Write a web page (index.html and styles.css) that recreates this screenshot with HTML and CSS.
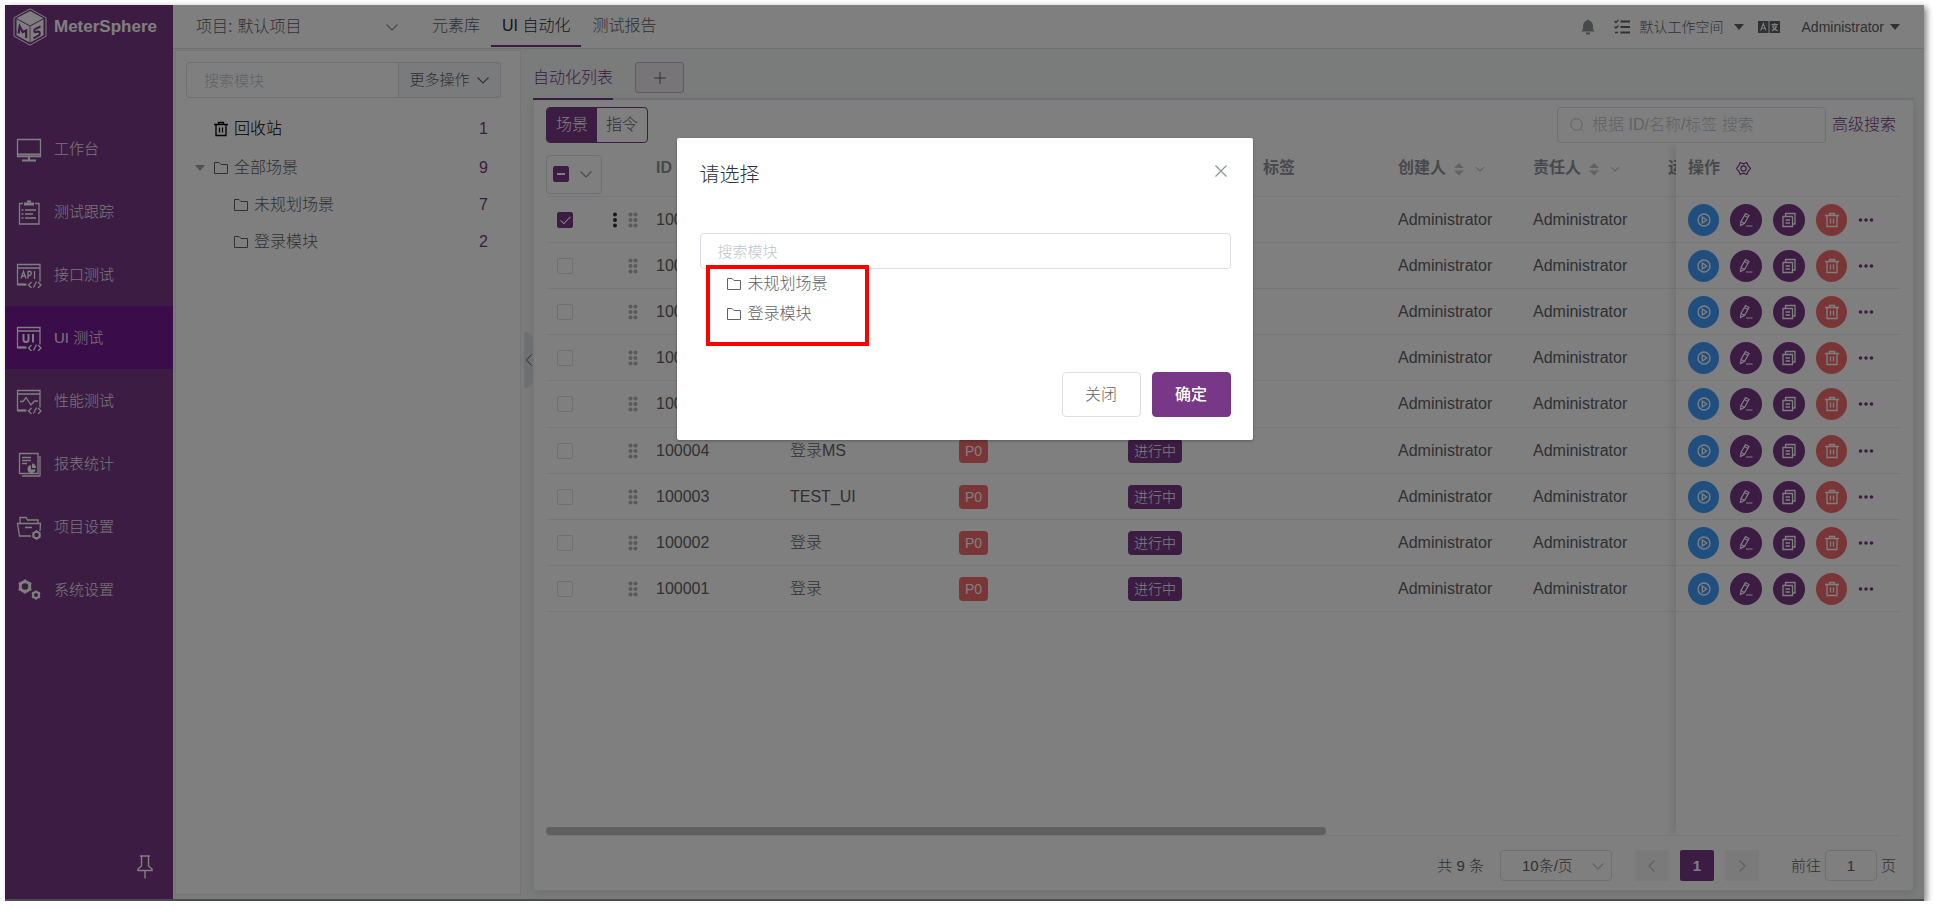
FILE: index.html
```html
<!DOCTYPE html>
<html lang="zh-CN">
<head>
<meta charset="utf-8">
<title>MeterSphere</title>
<link rel="stylesheet" href="styles.css">
</head>
<body>
<svg class="sprite" aria-hidden="true">
  <symbol id="i-folder" viewBox="0 0 16 16"><path d="M1.500 2.500h4.500l2 2h6.500v9h-13z" fill="none" stroke="currentColor"/></symbol>
  <symbol id="i-trash" viewBox="0 0 16 16"><path d="M1 3.500h14M5.500 3.500v-2h5v2M3 3.500v11h10v-11M6.500 6.500v5M9.500 6.500v5" fill="none" stroke="currentColor" stroke-width="1.300"/></symbol>
  <symbol id="i-down" viewBox="0 0 14 14"><path d="M1.500 4.500L7 10l5.500-5.500" fill="none" stroke="currentColor" stroke-width="1.100"/></symbol>
  <symbol id="i-left" viewBox="0 0 14 14"><path d="M9.500 1.500L4 7l5.500 5.500" fill="none" stroke="currentColor" stroke-width="1.400"/></symbol>
  <symbol id="i-right" viewBox="0 0 14 14"><path d="M4.500 1.500L10 7l-5.500 5.500" fill="none" stroke="currentColor" stroke-width="1.400"/></symbol>
  <symbol id="i-caret" viewBox="0 0 10 6"><path d="M0 0h10L5 6z" fill="currentColor"/></symbol>
  <symbol id="i-sort" viewBox="0 0 12 14"><path d="M1 6l5-5 5 5zM1 8.500l5 5 5-5z" fill="currentColor"/></symbol>
  <symbol id="i-play" viewBox="0 0 16 16"><circle cx="8" cy="8" r="6" fill="none" stroke="currentColor" stroke-width="1.300"/><path d="M6.300 5l4.400 3-4.400 3z" fill="none" stroke="currentColor" stroke-width="1.300"/></symbol>
  <symbol id="i-edit" viewBox="0 0 16 16"><path d="M2.500 13.500l.5-4L7.500 1.500l3.500 2L6.500 11.500zM6.500 3.500l3.300 1.900M3 9.500l3.500 2M8 14h6.500" fill="none" stroke="currentColor" stroke-width="1.200"/></symbol>
  <symbol id="i-copy" viewBox="0 0 16 16"><path d="M2 4.500h9.500v10H2zM4.500 4.500v-3H14v10.500h-2.500M4.500 8h4.500M4.500 11h4.500" fill="none" stroke="currentColor" stroke-width="1.300"/></symbol>
  <symbol id="i-dots" viewBox="0 0 16 6"><circle cx="2.500" cy="3" r="1.800"/><circle cx="8" cy="3" r="1.800"/><circle cx="13.500" cy="3" r="1.800"/></symbol>
  <symbol id="i-more" viewBox="0 0 6 16"><circle cx="3" cy="2.500" r="2"/><circle cx="3" cy="8" r="2"/><circle cx="3" cy="13.500" r="2"/></symbol>
  <symbol id="i-grip" viewBox="0 0 10 16"><circle cx="2.500" cy="2.500" r="2"/><circle cx="7.500" cy="2.500" r="2"/><circle cx="2.500" cy="8" r="2"/><circle cx="7.500" cy="8" r="2"/><circle cx="2.500" cy="13.500" r="2"/><circle cx="7.500" cy="13.500" r="2"/></symbol>
</svg>

<div class="frame">
  <aside class="sidebar">
    <a class="brand" href="#">
      <svg class="brand-logo" viewBox="0 0 34 38"><path d="M17 .8l16 9v18.400l-16 9-16-9V9.800z" fill="none" stroke="#fff"/><path d="M17 3l13.500 7.300L17 17.500 3.500 10.300z" fill="#fff"/><path d="M3.500 11.300L16.600 18.300v16.200L3.500 27.300zM30.500 11.300L17.400 18.300v16.200l13.100-7.200z" fill="#fff"/><path d="M5.500 25.500l1.200-7 3 5.500 3.500-1.500v7.500" fill="none" stroke="#783887" stroke-width="2.200"/><path d="M27.500 18.500l-5 2.300c-1.800 1-1.500 3.500 0 3.500l2.500-.8c2.500 0 2.200 3.200.5 4.200l-5 2.600" fill="none" stroke="#783887" stroke-width="2"/></svg>
      <span>MeterSphere</span>
    </a>
    <nav class="menu">
      <a class="menu-item" href="#"><svg viewBox="0 0 26 26"><path d="M1.500 3.500h23v17h-23z"/><path d="M1 18.500h24M13 20.500v3M6 24.500h14" stroke-width="2"/></svg><span>工作台</span></a>
      <a class="menu-item" href="#"><svg viewBox="0 0 26 26"><path d="M7 4.500H3.500v20.500h19.500V4.500H19"/><path d="M8 5h10" stroke-width="3"/><path d="M11 2.500h4" stroke-width="2"/><path d="M5.500 11h2M9 11h11M5.500 15h2M9 15h8M5.500 19h2M9 19h11"/></svg><span>测试跟踪</span></a>
      <a class="menu-item" href="#"><svg viewBox="0 0 26 26"><path d="M10 22.500H1.500v-20h22.500v17M1.500 6h22.500M15.500 20l-3 3 3 3M22 20l3 3-3 3M20.500 19.500l-3 6"/><path d="M1.500 22.500h9" stroke-width="2"/><path d="M5 16.500L7.500 9.500l2.500 7M6 14h3M12 16.500v-7h2.500q2 2-.5 4H12M18.500 9v8"/></svg><span>接口测试</span></a>
      <a class="menu-item is-active" href="#"><svg viewBox="0 0 26 26"><path d="M10 22.500H1.500v-20h22.500v17M1.500 6h22.500M15.500 20l-3 3 3 3M22 20l3 3-3 3M20.500 19.500l-3 6"/><path d="M1.500 22.500h9" stroke-width="2"/><path d="M7.500 9v5.500q0 2.500 2.500 2.500t2.500-2.500V9M17 9v8.500" stroke-width="2"/></svg><span>UI 测试</span></a>
      <a class="menu-item" href="#"><svg viewBox="0 0 26 26"><path d="M10 22.500H1.500v-20h22.500v17M1.500 6h22.500M15.500 20l-3 3 3 3M22 20l3 3-3 3M20.500 19.500l-3 6"/><path d="M1.500 22.500h9" stroke-width="2"/><path d="M4 13.500h3l3-4 5 7.500 3.500-4H22"/></svg><span>性能测试</span></a>
      <a class="menu-item" href="#"><svg viewBox="0 0 26 26"><path d="M3.500 2.500h18.500v20H3.500zM24 5v20.500M6 25h18M6 6.500h9M6 9.500h9M6 12.500h5"/><path d="M15 14a4 4 0 1 0 4.500 4.500H15z" fill="currentColor" stroke="none"/><path d="M16 12.500v4.500h4a4 4 0 0 0-4-4.500z" fill="currentColor" stroke="none"/></svg><span>报表统计</span></a>
      <a class="menu-item" href="#"><svg viewBox="0 0 26 26"><path d="M15 22H3.500L1.500 9.500h23l-.5 7.500M4 9.500V3.500h6l1.500 2.500H22v3.500M9 13.500h7"/><circle cx="20.500" cy="21" r="3.300" stroke-width="2"/><path d="M20.500 16v2M20.500 24v2M16.500 18.500l1.500 1M23 22.500l1.500 1M24.500 18.500l-1.500 1M18 22.500l-1.500 1"/></svg><span>项目设置</span></a>
      <a class="menu-item" href="#"><svg viewBox="0 0 26 26"><circle cx="9" cy="9.500" r="4.800" stroke-width="3"/><path d="M9 2.500v3M9 13.500v3M2.800 6l2.500 1.500M12.700 11.500l2.500 1.500M15.200 6l-2.500 1.500M5.300 11.500L2.800 13" stroke-width="2.500"/><circle cx="20" cy="18" r="3" stroke-width="2"/><path d="M20 13.500v2M20 20.500v2M16 15.700l1.500 1M22.500 19.300l1.500 1M24 15.700l-1.500 1M17.500 19.300l-1.500 1" stroke-width="2"/></svg><span>系统设置</span></a>
    </nav>
    <button class="pin" aria-label="固定菜单"><svg viewBox="0 0 16 24"><path d="M3 1h10M4.500 1v10L1 14v1.500h14V14l-3.500-3V1M8 15.500v8" fill="none" stroke="currentColor" stroke-width="1.400"/></svg></button>
  </aside>

  <div class="content">
    <header class="topbar">
      <div class="project">
        <label for="project">项目:</label>
        <span class="select-wrap project-select"><select id="project"><option>默认项目</option></select><svg class="arrow"><use href="#i-down"/></svg></span>
      </div>
      <nav class="topnav">
        <a href="#">元素库</a>
        <a class="is-current" href="#">UI 自动化</a>
        <a href="#">测试报告</a>
      </nav>
      <div class="tools">
        <button class="tool bell" aria-label="通知"><svg class="icon-16" viewBox="0 0 16 16"><path d="M8 0l1 1.500c3 .8 4 3 4 6 0 3 .6 4 2 5H1c1.400-1 2-2 2-5 0-3 1-5.200 4-6zM5.500 13.500h5l-1 2h-3z" fill="currentColor"/></svg></button>
        <button class="tool" aria-label="任务"><svg class="icon-16" viewBox="0 0 16 16"><path d="M6.500 2.500H16M6.500 8H16M6.500 13.500H16" stroke="currentColor" stroke-width="1.800"/><path d="M.5 2l1.500 1.500L4.500 1M.5 7.500L2 9l2.500-2.500M1 13.500h3" fill="none" stroke="currentColor" stroke-width="1.300"/></svg></button>
        <button class="tool workspace">默认工作空间 <svg class="caret"><use href="#i-caret"/></svg></button>
        <button class="tool language" aria-label="语言"><svg viewBox="0 0 22 12"><path d="M0 0h10.500v12H0zM11.500 0H22v12H11.500z" fill="currentColor"/><path d="M2.700 9.500L5.300 2.500l2.600 7M3.500 7.300h3.600M13.500 3.500h6.500M16.700 2v1.500M13.700 9.800q3.800-1.300 4.800-4.800H14.500q1.200 3.500 5.200 4.800" fill="none" stroke="#fff" stroke-width="1.100"/></svg></button>
        <button class="tool">Administrator <svg class="caret"><use href="#i-caret"/></svg></button>
      </div>
    </header>

    <div class="workspace-body">
      <section class="modules">
        <div class="module-search">
          <input type="text" placeholder="搜索模块" aria-label="搜索模块">
          <button>更多操作<svg class="icon-14"><use href="#i-down"/></svg></button>
        </div>
        <ul class="tree">
          <li class="trash"><span class="twist"></span><svg class="icon-16"><use href="#i-trash"/></svg><span class="name">回收站</span><span class="count">1</span></li>
          <li><span class="twist"><svg class="caret"><use href="#i-caret"/></svg></span><svg class="icon-16"><use href="#i-folder"/></svg><span class="name">全部场景</span><span class="count">9</span></li>
          <li class="child"><span class="twist"></span><svg class="icon-16"><use href="#i-folder"/></svg><span class="name">未规划场景</span><span class="count">7</span></li>
          <li class="child"><span class="twist"></span><svg class="icon-16"><use href="#i-folder"/></svg><span class="name">登录模块</span><span class="count">2</span></li>
        </ul>
      </section>

      <main class="main">
        <button class="collapse" aria-label="收起"><svg viewBox="0 0 8 14"><path d="M6.500 1.500L1.500 7l5 5.500" fill="none" stroke="currentColor"/></svg></button>
        <div class="tabs">
          <a class="tab" href="#">自动化列表</a>
          <button class="add" aria-label="新增"><svg viewBox="0 0 12 12"><path d="M6 0v12M0 6h12" stroke="currentColor"/></svg></button>
        </div>
        <section class="card">
          <div class="toolbar">
            <div class="switch"><button class="is-on">场景</button><button>指令</button></div>
            <div class="filters">
              <label class="search"><svg viewBox="0 0 14 14"><circle cx="6.500" cy="6.500" r="5.800" fill="none" stroke="currentColor"/><path d="M10.500 10.500l3 3" stroke="currentColor"/></svg><input type="text" placeholder="根据 ID/名称/标签 搜索" aria-label="搜索"></label>
              <a href="#">高级搜索</a>
            </div>
          </div>
          <div class="table-area">
            <div class="table-scroll">
              <table class="grid">
                <colgroup><col class="c-check"><col class="c-handle"><col class="c-id"><col class="c-wide"><col class="c-wide"><col class="c-norm"><col class="c-norm"><col class="c-norm"><col class="c-norm"><col class="c-cut"></colgroup>
                <thead><tr>
                  <th class="check-head"><span class="check-box"><input type="checkbox" class="partial" aria-label="全选"><svg class="icon-14"><use href="#i-down"/></svg></span></th>
                  <th></th><th>ID</th><th></th><th></th><th></th><th>标签</th>
                  <th>创建人<svg class="sort"><use href="#i-sort"/></svg><svg class="filter"><use href="#i-down"/></svg></th>
                  <th>责任人<svg class="sort"><use href="#i-sort"/></svg><svg class="filter"><use href="#i-down"/></svg></th>
                  <th class="cut">运</th>
                </tr></thead>
                <tbody id="rows"></tbody>
              </table>
              <div class="scrollbar"></div>
            </div>
            <div class="table-fixed">
              <table class="grid">
                <thead><tr><th>操作<svg class="gear" viewBox="0 0 16 16"><path d="M4.500 1.500L8 3l3.500-1.500L13 5l2.500 3-2.500 3-1.500 3.500L8 13l-3.500 1.500L3 11 .5 8 3 5z" fill="none" stroke="currentColor" stroke-width="1.200"/><circle cx="8" cy="8" r="2.800" fill="none" stroke="currentColor" stroke-width="1.200"/></svg></th></tr></thead>
                <tbody id="actions"></tbody>
              </table>
            </div>
          </div>
          <footer class="pager">
            <span class="total">共 9 条</span>
            <span class="select-wrap page-size"><select aria-label="每页条数"><option>10条/页</option></select><svg class="arrow"><use href="#i-down"/></svg></span>
            <div class="pages">
              <button aria-label="上一页"><svg class="icon-14"><use href="#i-left"/></svg></button>
              <button class="is-current">1</button>
              <button aria-label="下一页"><svg class="icon-14"><use href="#i-right"/></svg></button>
            </div>
            <label class="jump">前往<input type="text" value="1">页</label>
          </footer>
        </section>
      </main>
    </div>
  </div>

  <div class="overlay">
    <div class="dialog" role="dialog" aria-labelledby="dialog-title">
      <div class="dialog-head">
        <h2 id="dialog-title">请选择</h2>
        <button class="close" aria-label="关闭对话框"><svg viewBox="0 0 12 12"><path d="M.5.5l11 11M11.500.5l-11 11" stroke="currentColor" stroke-width="1.200"/></svg></button>
      </div>
      <div class="dialog-body">
        <input type="text" placeholder="搜索模块" aria-label="搜索模块">
        <ul class="picker">
          <li><svg class="icon-16"><use href="#i-folder"/></svg>未规划场景</li>
          <li><svg class="icon-16"><use href="#i-folder"/></svg>登录模块</li>
        </ul>
        <div class="marker"></div>
      </div>
      <div class="dialog-foot"><button>关闭</button><button class="primary">确定</button></div>
    </div>
  </div>
</div>
<script src="app.js"></script>
</body>
</html>
```

FILE: styles.css
```css
* { box-sizing: border-box; }

body {
  margin: 0;
  padding: 5px 9px 7px 5px;
  background: #fff;
  color: #606266;
  font: 300 16px/24px "Liberation Sans", "Noto Sans CJK SC", sans-serif;
}

button, input, select { font: inherit; color: inherit; margin: 0; }
button { border: 0; background: none; padding: 0; display: inline-flex; align-items: center; justify-content: center; }
input[type="text"] { border: 1px solid #dcdfe6; border-radius: 4px; background: #fff; min-width: 0; }
input::placeholder { color: #c0c4cc; opacity: 1; }
select { appearance: none; border: 0; background: none; padding: 0; width: 100%; }
a { color: inherit; text-decoration: none; }
ul { list-style: none; margin: 0; padding: 0; }
svg { flex: none; fill: currentColor; }

.sprite { display: none; }
.icon-14 { width: 14px; height: 14px; }
.icon-16 { width: 16px; height: 16px; }
.caret { width: 10px; height: 6px; }

.frame {
  position: relative;
  display: flex;
  min-height: calc(100vh - 12px);
  border-bottom: 2px solid #4b4d50;
  box-shadow: 3px 2px 6px rgba(0, 0, 0, .45);
  clip-path: inset(-5px -9px 0 -5px);
}

/* sidebar */
.sidebar { width: 168px; flex: none; display: flex; flex-direction: column; background: #783887; color: #fff; }
.brand { display: flex; align-items: center; gap: 7px; height: 40px; padding: 3px 0 0 8px; font-size: 17px; font-weight: bold; }
.brand-logo { width: 34px; height: 38px; }
.menu { margin-top: 72px; flex: 1; }
.menu-item { display: flex; align-items: center; gap: 12px; height: 63px; padding-left: 11px; font-size: 15px; }
.menu-item svg { width: 26px; height: 26px; fill: none; stroke: currentColor; stroke-width: 1.3; }
.menu-item span { opacity: .9; }
.menu-item.is-active { background: #741892; }
.pin { align-self: flex-end; margin: 0 20px 20px 0; }
.pin svg { width: 16px; height: 24px; }

/* top bar */
.content { flex: 1; min-width: 0; display: flex; flex-direction: column; background: #f5f6f7; }
.topbar { display: flex; height: 44px; background: #fff; border-bottom: 1px solid #e0e0e0; }
.project { display: flex; align-items: center; gap: 5px; padding-left: 23px; width: 248px; }
.select-wrap { position: relative; display: flex; align-items: center; }
.select-wrap .arrow { position: absolute; right: 2px; width: 14px; height: 14px; color: #909399; pointer-events: none; }
.project-select { width: 164px; }
.topnav { display: flex; }
.topnav a { height: 42px; padding: 9px 11px 0; border-bottom: 2px solid transparent; }
.topnav .is-current { color: #303133; border-color: #783887; }
.tools { display: flex; align-items: center; margin-left: auto; padding-right: 24px; font-size: 14px; }
.tool { gap: 10px; margin-right: 18px; }
.tool:last-child { gap: 6px; margin: 0 0 0 4px; }
.tool.workspace { margin: 0 14px 0 -8px; }
.bell { color: #909399; }
.language svg { width: 22px; height: 12px; }

/* module tree */
.workspace-body { display: flex; flex: 1; }
.modules { width: 346px; flex: none; margin: 1px 0 4px 2px; padding: 11px 19px 0 10px; background: #fff; border: 1px solid #ebebeb; }
.module-search { display: flex; font-size: 15px; }
.module-search input { flex: 1; height: 36px; padding: 0 17px; border-radius: 4px 0 0 4px; }
.module-search button { width: 102px; gap: 6px; background: #f5f7fa; border: 1px solid #dcdfe6; border-left: 0; border-radius: 0 4px 4px 0; }
.tree { padding: 12px 13px 0 9px; }
.tree li { display: flex; align-items: center; height: 37px; }
.tree .trash { color: #000; height: 38px; margin-bottom: 1px; }
.tree .twist { width: 18px; display: flex; color: #a0a4ac; }
.tree .child { padding-left: 20px; }
.tree .name { margin-left: 5px; flex: 1; }
.tree .count { color: #783887; }

/* main */
.main { position: relative; flex: 1; min-width: 0; display: flex; flex-direction: column; padding: 0 10px 8px 12px; }
.collapse { position: absolute; left: 3px; top: 283px; width: 9px; height: 56px; background: #d6e0e6; border-radius: 0 8px 8px 0; }
.collapse svg { width: 8px; height: 14px; }
.tabs { display: flex; align-items: center; gap: 22px; height: 51px; border-bottom: 2px solid #e4e7ed; }
.tab { height: 51px; margin-top: 2px; padding-top: 17px; border-bottom: 2px solid #783887; color: #783887; }
.add { width: 49px; height: 31px; margin-top: 8px; border: 1px solid #c9afcf; border-radius: 3px; background: #f1ebf3; }
.add svg { width: 12px; height: 12px; }
.card { flex: 1; display: flex; flex-direction: column; padding: 7px 13px 0 12px; background: #fff; border: 1px solid #ebeef5; border-top: 0; border-radius: 4px; box-shadow: 0 2px 8px rgba(0, 0, 0, .1); }
.toolbar { display: flex; justify-content: space-between; padding-right: 4px; }
.switch { display: flex; border: 1px solid #783887; border-radius: 4px; overflow: hidden; }
.switch button { width: 50px; height: 34px; }
.switch .is-on { background: #783887; color: #fff; }
.filters { display: flex; align-items: center; gap: 6px; color: #783887; }
.search { position: relative; display: flex; align-items: center; color: #c0c4cc; }
.search svg { position: absolute; left: 13px; width: 14px; height: 14px; }
.search input { width: 269px; height: 36px; padding: 0 34px; }

.table-area { flex: 1; display: flex; margin-top: 2px; overflow: hidden; border-bottom: 1px solid #ebeef5; }
.table-scroll { flex: 1; min-width: 0; display: flex; flex-direction: column; justify-content: space-between; }
.scrollbar { width: 69%; height: 8px; border-radius: 4px; background: #c1c1c1; }
.table-fixed { width: 224px; flex: none; box-shadow: -2px 0 10px rgba(0, 0, 0, .14); }
.grid { width: 100%; table-layout: fixed; border-collapse: separate; border-spacing: 0; }
.grid th, .grid td { height: 46px; padding: 0 0 0 10px; border-bottom: 1px solid #ebeef5; text-align: left; white-space: nowrap; }
.grid tr:nth-child(5) td { height: 47px; }
.grid td:first-child { padding-left: 11px; }
.grid th { height: 52px; padding-bottom: 5px; color: #909399; font-weight: 600; }
.grid th svg { vertical-align: middle; }
.table-fixed .grid th, .table-fixed .grid td { padding-left: 12px; }
.grid th.check-head { padding: 7px 0 0; }
.grid .cut { overflow: hidden; }
.c-check { width: 56px; }
.c-handle { width: 44px; }
.c-id { width: 134px; }
.c-wide { width: 169px; }
.c-norm { width: 135px; }
.c-cut { width: 18px; }
.check-box { display: flex; align-items: center; justify-content: space-between; width: 56px; height: 39px; padding: 0 8px 0 6px; border: 1px solid #dcdfe6; border-radius: 4px; }
input[type="checkbox"] { appearance: none; position: relative; display: block; width: 16px; height: 16px; border: 1px solid #dcdfe6; border-radius: 2px; background: #fff; }
input[type="checkbox"]:checked, input.partial { background: #783887; border-color: #783887; }
input[type="checkbox"]:checked::after { content: ""; position: absolute; left: 5px; top: 1px; width: 4px; height: 9px; border: solid #fff; border-width: 0 1px 1px 0; transform: rotate(45deg); }
input.partial::after { content: ""; position: absolute; left: 3px; top: 6px; width: 8px; height: 2px; background: #fff; }
.sort { width: 12px; height: 14px; margin-left: 7px; color: #c0c4cc; }
.filter { width: 10px; height: 10px; margin-left: 10px; }
.gear { width: 15px; height: 15px; margin-left: 16px; color: #783887; }
.handles { display: flex; justify-content: flex-end; gap: 10px; padding-right: 8px; }
.handles svg { height: 16px; }
.handles .more { width: 6px; color: #303133; }
.handles .grip { width: 10px; color: #b4b4b4; }
.tag { display: inline-block; height: 24px; padding: 0 6px; border-radius: 4px; background: #783887; color: #fff; font-size: 14px; vertical-align: middle; }
.tag.level { background: #f56c6c; }
.ops { display: flex; align-items: center; gap: 11px; }
.ops button { width: 32px; height: 32px; border-radius: 50%; background: #783887; color: #fff; }
.ops svg { width: 16px; height: 16px; }
.ops .run { width: 31px; background: #409eff; }
.ops .delete { width: 31px; background: #f56c6c; }
.ops .menu-dots { width: 16px; background: none; color: #783887; }
.ops .menu-dots svg { width: 16px; height: 6px; }

/* pagination */
.pager { display: flex; align-items: center; justify-content: flex-end; padding: 14px 4px 9px 0; font-size: 15px; }
.page-size { width: 112px; height: 31px; margin: 0 23px 0 16px; padding: 0 10px 0 21px; border: 1px solid #dcdfe6; border-radius: 4px; }
.page-size .arrow { right: 6px; color: #c0c4cc; }
.pages { display: flex; gap: 11px; }
.pages button { width: 34px; height: 31px; border-radius: 2px; background: #f4f4f5; color: #c0c4cc; }
.pages .is-current { background: #783887; color: #fff; font-weight: bold; }
.jump { display: flex; align-items: center; gap: 4px; margin-left: 32px; }
.jump input { width: 52px; height: 31px; text-align: center; }

/* dialog */
.overlay { position: absolute; inset: 0; display: flex; justify-content: center; align-items: flex-start; background: rgba(0, 0, 0, .5); }
.dialog { width: 30%; min-width: 576px; margin-top: 133px; padding: 0 22px 23px 23px; border-radius: 2px; background: #fff; box-shadow: 0 1px 3px rgba(0, 0, 0, .3); }
.dialog-head { display: flex; justify-content: space-between; padding-top: 23px; color: #303133; }
.dialog-head h2 { margin: 0; font-size: 20px; line-height: 28px; font-weight: inherit; }
.close { height: 20px; margin-right: 4px; color: #909399; }
.close svg { width: 12px; height: 12px; }
.dialog-body { position: relative; padding-top: 44px; }
.dialog-body input { display: block; width: 100%; height: 36px; padding: 0 17px; font-size: 15px; }
.picker { padding-left: 26px; }
.picker li { display: flex; align-items: center; gap: 6px; height: 30px; }
.marker { position: absolute; left: 6px; top: 76px; width: 163px; height: 81px; border: 4px solid #f00; }
.dialog-foot { display: flex; justify-content: flex-end; gap: 11px; padding-top: 43px; }
.dialog-foot button { width: 79px; height: 45px; border: 1px solid #dcdfe6; border-radius: 4px; }
.dialog-foot .primary { background: #783887; border-color: #783887; color: #fff; font-weight: 500; }
```

FILE: app.js
```js
const scenes = [
  { id: 100009, checked: true },
  { id: 100008 },
  { id: 100007 },
  { id: 100006 },
  { id: 100005 },
  { id: 100004, name: "登录MS", level: "P0", status: "进行中" },
  { id: 100003, name: "TEST_UI", level: "P0", status: "进行中" },
  { id: 100002, name: "登录", level: "P0", status: "进行中" },
  { id: 100001, name: "登录", level: "P0", status: "进行中" }
];

const icon = (name, cls = "") => `<svg class="${cls}"><use href="#i-${name}"/></svg>`;

document.getElementById("rows").innerHTML = scenes.map(s => `
  <tr>
    <td><input type="checkbox" aria-label="选择 ${s.id}" ${s.checked ? "checked" : ""}></td>
    <td><div class="handles">${s.checked ? icon("more", "more") : ""}${icon("grip", "grip")}</div></td>
    <td>${s.id}</td>
    <td>${s.name || ""}</td>
    <td>${s.level ? `<span class="tag level">${s.level}</span>` : ""}</td>
    <td>${s.status ? `<span class="tag">${s.status}</span>` : ""}</td>
    <td></td>
    <td>Administrator</td>
    <td>Administrator</td>
    <td></td>
  </tr>`).join("");

document.getElementById("actions").innerHTML = scenes.map(() => `
  <tr><td><div class="ops">
    <button class="run" aria-label="执行">${icon("play")}</button>
    <button aria-label="编辑">${icon("edit")}</button>
    <button aria-label="复制">${icon("copy")}</button>
    <button class="delete" aria-label="删除">${icon("trash")}</button>
    <button class="menu-dots" aria-label="更多">${icon("dots")}</button>
  </div></td></tr>`).join("");
```
